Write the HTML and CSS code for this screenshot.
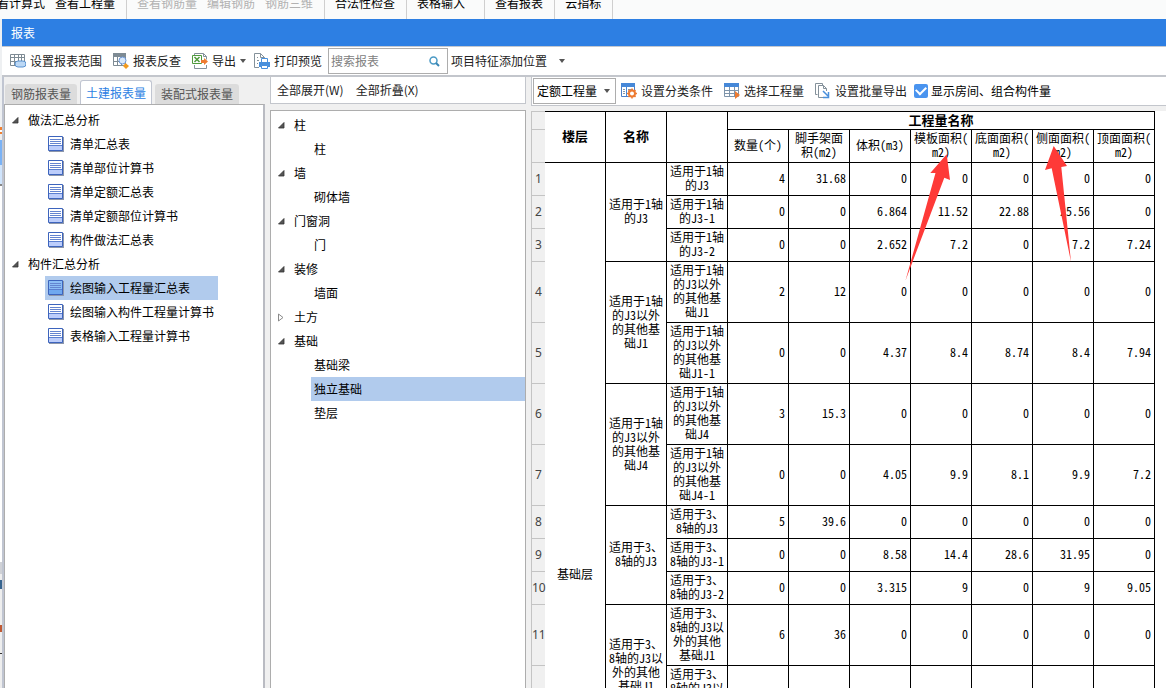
FILE: index.html
```html
<!DOCTYPE html>
<html lang="zh-CN">
<head>
<meta charset="utf-8">
<title>报表</title>
<link rel="stylesheet" href="styles.css">
</head>
<body>
<svg class="defs" width="0" height="0" aria-hidden="true">
  <symbol id="i-caret" viewBox="0 0 6 4"><path d="M0 0h6L3 4z" fill="#555"/></symbol>
  <symbol id="i-open" viewBox="0 0 7 7"><path d="M6 .5V6H.5z" fill="#555" stroke="#333" stroke-width=".8"/></symbol>
  <symbol id="i-closed" viewBox="0 0 6 9"><path d="M.5 1v7L5 4.500z" fill="#fff" stroke="#8a8a8a"/></symbol>
  <symbol id="i-doc" viewBox="0 0 16 16">
    <path d="M1 1h15v15H1z" fill="#8d97ab"/>
    <path d="M.5 .5h14v14H.5z" fill="var(--doc-top,#fff)" stroke="#3d64bd"/>
    <path d="M1 10h13v4H1z" fill="var(--doc-base,#bccdfb)"/>
    <path d="M2 3.500h11M2 5.500h11M2 7.500h11" stroke="#6484d0"/>
    <path d="M1 9.500h13" stroke="#5b7fd0"/>
  </symbol>
</svg>

<nav class="ribbon">
  <div class="ribbon-group"><span>看计算式</span><span>查看工程量</span></div>
  <div class="ribbon-group is-off"><span>查看钢筋量</span><span>编辑钢筋</span><span>钢筋三维</span></div>
  <div class="ribbon-group"><span>合法性检查</span></div>
  <div class="ribbon-group is-wide"><span>表格输入</span></div>
  <div class="ribbon-group"><span>查看报表</span></div>
  <div class="ribbon-group"><span>云指标</span></div>
</nav>

<div class="stage">
  <div class="backdrop"></div>
  <main class="window">
    <h1 class="title">报表</h1>
    <div class="toolbar">
      <button class="tool"><svg width="16" height="16" viewBox="0 0 16 16" fill="none"><path d="M.5 1.500h14v11h-14zM.5 4.500h14M.5 8.500h14M4.500 1v11M8.500 1v8M11.500 1v8" stroke="#7e8b94"/><rect x="5" y="8" width="11" height="6" rx="3" fill="#bcd8f5" stroke="#5b92cf"/></svg>设置报表范围</button>
      <button class="tool"><svg width="16" height="16" viewBox="0 0 16 16" fill="none"><path d="M0 0h13v4H0z" fill="#7e8b94"/><path d="M.5 .5h12v12H.5zM.5 8.500h12M4.500 4v9M8.500 4v9" stroke="#7e8b94"/><circle cx="9.500" cy="7.500" r="3.500" fill="#d9e9fb" stroke="#6b96d6"/><path d="M12.500 10l3.500 3-3 3-3-3z" fill="#f29a1f"/></svg>报表反查</button>
      <button class="tool tool-menu"><svg width="16" height="16" viewBox="0 0 16 16" fill="none"><path d="M2.500 3V.5h9l3 3v3M14.500 12v3.500h-12V12M11.500 .5v3h3" stroke="#84919a"/><path d="M.5 2.500h9v8h-9z" fill="#fff" stroke="#4f9a3d"/><path d="M2.500 4l5 5m0-5l-5 5" stroke="#4f9a3d" stroke-width="1.500"/><path d="M9 7h3V5l4 3.500-4 3.500v-2H9z" fill="#ee7b31"/></svg>导出<svg class="caret" width="6" height="4"><use href="#i-caret"/></svg></button>
      <button class="tool"><svg width="16" height="16" viewBox="0 0 16 16" fill="none"><path d="M5 14.500H.5V.5h6l4 4V6M6.500 .5v4h4M3 4.500h1M3 7.500h2M3 10.500h1" stroke="#84919a"/><path d="M5 9h11v5H5z" fill="#4a90dc"/><path d="M7.500 9V5.500h6V9M7.500 12.500h6v3h-6z" fill="#fff" stroke="#4a90dc"/></svg>打印预览</button>
      <label class="search"><input type="text" placeholder="搜索报表" aria-label="搜索报表"><svg width="11" height="11" viewBox="0 0 11 11" fill="none"><circle cx="4.500" cy="4.500" r="3.500" stroke="#4b9ac5" stroke-width="1.500"/><path d="M7 7l3 3" stroke="#3a86b5" stroke-width="2"/></svg></label>
      <button class="tool tool-feature">项目特征添加位置<svg class="caret" width="6" height="4"><use href="#i-caret"/></svg></button>
    </div>

    <div class="columns">
      <section class="reports">
        <div class="tabs" role="tablist">
          <button class="tab" role="tab">钢筋报表量</button>
          <button class="tab is-active" role="tab" aria-selected="true">土建报表量</button>
          <button class="tab" role="tab">装配式报表量</button>
        </div>
        <ul class="tree report-tree">
          <li class="node"><button class="toggle" aria-label="折叠"><svg width="7" height="7"><use href="#i-open"/></svg></button>做法汇总分析</li>
          <li class="leaf"><svg width="16" height="16"><use href="#i-doc"/></svg>清单汇总表</li>
          <li class="leaf"><svg width="16" height="16"><use href="#i-doc"/></svg>清单部位计算书</li>
          <li class="leaf"><svg width="16" height="16"><use href="#i-doc"/></svg>清单定额汇总表</li>
          <li class="leaf"><svg width="16" height="16"><use href="#i-doc"/></svg>清单定额部位计算书</li>
          <li class="leaf"><svg width="16" height="16"><use href="#i-doc"/></svg>构件做法汇总表</li>
          <li class="node"><button class="toggle" aria-label="折叠"><svg width="7" height="7"><use href="#i-open"/></svg></button>构件汇总分析</li>
          <li class="leaf is-selected"><svg width="16" height="16"><use href="#i-doc"/></svg>绘图输入工程量汇总表</li>
          <li class="leaf"><svg width="16" height="16"><use href="#i-doc"/></svg>绘图输入构件工程量计算书</li>
          <li class="leaf"><svg width="16" height="16"><use href="#i-doc"/></svg>表格输入工程量计算书</li>
        </ul>
      </section>

      <section class="parts">
        <div class="parts-bar"><button class="tool">全部展开(W)</button><button class="tool">全部折叠(X)</button></div>
        <ul class="tree part-tree">
          <li class="node"><button class="toggle" aria-label="折叠"><svg width="7" height="7"><use href="#i-open"/></svg></button>柱</li>
          <li class="leaf">柱</li>
          <li class="node"><button class="toggle" aria-label="折叠"><svg width="7" height="7"><use href="#i-open"/></svg></button>墙</li>
          <li class="leaf">砌体墙</li>
          <li class="node"><button class="toggle" aria-label="折叠"><svg width="7" height="7"><use href="#i-open"/></svg></button>门窗洞</li>
          <li class="leaf">门</li>
          <li class="node"><button class="toggle" aria-label="折叠"><svg width="7" height="7"><use href="#i-open"/></svg></button>装修</li>
          <li class="leaf">墙面</li>
          <li class="node"><button class="toggle" aria-label="展开"><svg width="6" height="9"><use href="#i-closed"/></svg></button>土方</li>
          <li class="node"><button class="toggle" aria-label="折叠"><svg width="7" height="7"><use href="#i-open"/></svg></button>基础</li>
          <li class="leaf">基础梁</li>
          <li class="leaf is-selected">独立基础</li>
          <li class="leaf">垫层</li>
        </ul>
      </section>

      <section class="result">
        <div class="result-bar">
          <div class="picker"><select aria-label="工程量类型"><option>定额工程量</option></select><svg class="caret" width="6" height="4"><use href="#i-caret"/></svg></div>
          <button class="tool"><svg width="16" height="16" viewBox="0 0 16 16" fill="none"><path d="M.5 1.500h13v12H.5z" fill="#fff" stroke="#4a80c8"/><path d="M0 0h14v4H0z" fill="#4688d8"/><path d="M5.500 4v9" stroke="#4688d8"/><path d="M2 6.500h2M2 8.500h2M2 10.500h2M7 6.500h5M7 8.500h3" stroke="#8897a5"/><circle cx="11" cy="10.500" r="3" fill="#fff" stroke="#ee7b31" stroke-width="2"/><path d="M11 5.500v2M11 13.500v2M6 10.500h2M14 10.500h2M7.500 7l1.500 1.500M13 12.500l1.500 1.500M14.500 7L13 8.500M9 12.500L7.500 14" stroke="#ee7b31" stroke-width="1.500"/></svg>设置分类条件</button>
          <button class="tool"><svg width="16" height="16" viewBox="0 0 16 16" fill="none"><path d="M.5 1.500h14v12H.5zM0 7.500h15M0 10.500h15M5.500 4v10M10.500 4v10" stroke="#7e94aa"/><path d="M0 0h15v4H0z" fill="#4688d8"/><path d="M11 8v8l5-4z" fill="#ee7b31"/></svg>选择工程量</button>
          <button class="tool"><svg width="16" height="16" viewBox="0 0 16 16" fill="none"><path d="M2.500 11.500h-2V.5h7v2" stroke="#84919a"/><path d="M8 14.500H3.500v-12h5l3 3V8M8.500 2.500v3h3" stroke="#84919a"/><path d="M8 8l5 5m.5-4v5.500H8" stroke="#4a90dc" stroke-width="1.500"/></svg>设置批量导出</button>
          <label class="check"><input type="checkbox" checked><span>显示房间、组合构件量</span></label>
        </div>

        <div class="sheet">
          <table>
            <colgroup><col class="c-num"><col><col><col><col><col><col><col><col><col><col></colgroup>
            <thead>
              <tr class="r-top"><td class="rn"></td><th rowspan="2">楼层</th><th rowspan="2">名称</th><th rowspan="2"></th><th colspan="7">工程量名称</th></tr>
              <tr class="r-low"><td class="rn"></td><td>数量(个)</td><td>脚手架面<br>积(m2)</td><td>体积(m3)</td><td>模板面积(<br>m2)</td><td>底面面积(<br>m2)</td><td>侧面面积(<br>m2)</td><td>顶面面积(<br>m2)</td></tr>
            </thead>
            <tbody>
              <tr class="r-low"><td class="rn">1</td><td rowspan="13">基础层</td><td rowspan="3">适用于1轴<br>的J3</td><td>适用于1轴<br>的J3</td><td class="n">4</td><td class="n">31.68</td><td class="n">0</td><td class="n">0</td><td class="n">0</td><td class="n">0</td><td class="n">0</td></tr>
              <tr class="r-low"><td class="rn">2</td><td>适用于1轴<br>的J3-1</td><td class="n">0</td><td class="n">0</td><td class="n">6.864</td><td class="n">11.52</td><td class="n">22.88</td><td class="n">25.56</td><td class="n">0</td></tr>
              <tr class="r-low"><td class="rn">3</td><td>适用于1轴<br>的J3-2</td><td class="n">0</td><td class="n">0</td><td class="n">2.652</td><td class="n">7.2</td><td class="n">0</td><td class="n">7.2</td><td class="n">7.24</td></tr>
              <tr class="r-tall"><td class="rn">4</td><td rowspan="2">适用于1轴<br>的J3以外<br>的其他基<br>础J1</td><td>适用于1轴<br>的J3以外<br>的其他基<br>础J1</td><td class="n">2</td><td class="n">12</td><td class="n">0</td><td class="n">0</td><td class="n">0</td><td class="n">0</td><td class="n">0</td></tr>
              <tr class="r-tall"><td class="rn">5</td><td>适用于1轴<br>的J3以外<br>的其他基<br>础J1-1</td><td class="n">0</td><td class="n">0</td><td class="n">4.37</td><td class="n">8.4</td><td class="n">8.74</td><td class="n">8.4</td><td class="n">7.94</td></tr>
              <tr class="r-tall"><td class="rn">6</td><td rowspan="2">适用于1轴<br>的J3以外<br>的其他基<br>础J4</td><td>适用于1轴<br>的J3以外<br>的其他基<br>础J4</td><td class="n">3</td><td class="n">15.3</td><td class="n">0</td><td class="n">0</td><td class="n">0</td><td class="n">0</td><td class="n">0</td></tr>
              <tr class="r-tall"><td class="rn">7</td><td>适用于1轴<br>的J3以外<br>的其他基<br>础J4-1</td><td class="n">0</td><td class="n">0</td><td class="n">4.05</td><td class="n">9.9</td><td class="n">8.1</td><td class="n">9.9</td><td class="n">7.2</td></tr>
              <tr class="r-low"><td class="rn">8</td><td rowspan="3">适用于3、<br>8轴的J3</td><td>适用于3、<br>8轴的J3</td><td class="n">5</td><td class="n">39.6</td><td class="n">0</td><td class="n">0</td><td class="n">0</td><td class="n">0</td><td class="n">0</td></tr>
              <tr class="r-low"><td class="rn">9</td><td>适用于3、<br>8轴的J3-1</td><td class="n">0</td><td class="n">0</td><td class="n">8.58</td><td class="n">14.4</td><td class="n">28.6</td><td class="n">31.95</td><td class="n">0</td></tr>
              <tr class="r-low"><td class="rn">10</td><td>适用于3、<br>8轴的J3-2</td><td class="n">0</td><td class="n">0</td><td class="n">3.315</td><td class="n">9</td><td class="n">0</td><td class="n">9</td><td class="n">9.05</td></tr>
              <tr class="r-tall"><td class="rn">11</td><td rowspan="2">适用于3、<br>8轴的J3以<br>外的其他<br>基础J1</td><td>适用于3、<br>8轴的J3以<br>外的其他<br>基础J1</td><td class="n">6</td><td class="n">36</td><td class="n">0</td><td class="n">0</td><td class="n">0</td><td class="n">0</td><td class="n">0</td></tr>
              <tr class="r-tall"><td class="rn"></td><td>适用于3、<br>8轴的J3以<br>外的其他<br>基础J1-1</td><td></td><td></td><td></td><td></td><td></td><td></td><td></td></tr>
              <tr class="r-rest"><td class="rn"></td><td></td><td></td><td></td><td></td><td></td><td></td><td></td><td></td><td></td></tr>
            </tbody>
          </table>
          <svg class="marks" width="180" height="120" viewBox="0 0 180 120" fill="#fe3a38" aria-hidden="true">
            <path d="M46.700 10.300L30.300 29l5.200 0L5.500 136.500L44.300 33.700l5.700 2.300z"/>
            <path d="M153.700 2L145 26l6.700-1.700L170 113l1 5L161.300 23l5.700-1z"/>
          </svg>
        </div>
      </section>
    </div>
  </main>
</div>
</body>
</html>
```
FILE: styles.css
```css
* { box-sizing: border-box; }

body {
  margin: 0;
  height: 100vh;
  display: flex;
  flex-direction: column;
  overflow: hidden;
  background: #f0f0f0;
  color: #000;
  font: 12px/16px "Noto Sans CJK SC", sans-serif;
  white-space: nowrap;
}

button, input, select { font: inherit; color: inherit; }
button { border: 0; background: none; padding: 0; }
svg { display: block; flex: none; }
.defs { position: absolute; }

.ribbon {
  display: flex;
  flex: none;
  align-items: flex-end;
  height: 19px;
  overflow: hidden;
  background: #fafbfb;
}
.ribbon-group {
  display: flex;
  gap: 10px;
  height: 24px;
  padding: 0 11px 0 10px;
  border-right: 1px solid #cfcfcf;
}
.ribbon-group:first-child { margin-left: -13px; }
.ribbon-group.is-wide { padding-right: 19px; }
.is-off { color: #b2b2b2; }

.stage { display: flex; flex: 1; min-height: 0; }
.backdrop {
  width: 2px;
  background: linear-gradient(#eef0f2 108px, #f08030 108px 111px, #fff 111px 113px, #f08030 113px 115px,
    #eee 115px 121px, #7ab2f5 121px 146px, #cfe4fc 146px 165px, #888 165px 167px, #fff 167px 543px,
    #cfd1d6 543px 555px, #eee 555px 561px, #36648f 561px 570px, #eee 570px 606px, #c05a34 606px 613px,
    #eee 613px 634px, #333 634px 635px, #eee 635px);
}
.window { display: flex; flex: 1; flex-direction: column; min-width: 0; }

.title {
  flex: none;
  margin: 0;
  height: 27px;
  padding: 0 9px;
  background: #2d7fe3;
  color: #fff;
  font-size: 12px;
  font-weight: 400;
  line-height: 27px;
}

.toolbar {
  display: flex;
  flex: none;
  align-items: center;
  gap: 1px;
  height: 31px;
  padding-left: 3px;
  border-top: 1px solid #c3c8d0;
  border-bottom: 2px solid #c3c6cc;
  background: #fff;
}
.tool {
  display: flex;
  align-items: center;
  gap: 4px;
  height: 20px;
  padding: 0 5px;
  color: #222;
}
.tool-menu { padding-right: 2px; }
.tool-feature { padding-left: 2px; gap: 12px; }
.search {
  display: flex;
  align-items: center;
  width: 120px;
  height: 26px;
  padding: 0 7px 0 2px;
  border: 1px solid #adadad;
}
.search input { flex: 1; min-width: 0; padding: 0; border: 0; outline: 0; background: none; }
.search input::placeholder { color: #808080; }

.columns {
  display: flex;
  flex: 1;
  gap: 5px;
  min-height: 0;
  border-left: 2px solid #c0c5d1;
}
.reports, .parts, .result { display: flex; flex-direction: column; min-height: 0; }
.reports { flex: none; width: 261px; }
.parts { flex: none; width: 256px; }
.result { flex: 1; min-width: 0; }

.tabs { display: flex; flex: none; align-items: flex-end; gap: 3px; height: 28px; margin-bottom: -1px; padding-left: 1px; }
.tab {
  height: 20px;
  margin-bottom: 1px;
  padding: 0 6px;
  border-radius: 3px 3px 0 0;
  background: #dcdcdc;
  color: #555;
}
.tab.is-active {
  height: 25px;
  margin-bottom: 0;
  padding: 0 5px;
  border: 1px solid #c0c5d1;
  border-bottom: 0;
  background: #fff;
  color: #2d7fe3;
}

.tree {
  flex: 1;
  min-height: 0;
  margin: 0;
  padding: 3px 0 0;
  border: 1px solid #adadad;
  border-bottom: 0;
  background: #fff;
  list-style: none;
}
.report-tree { border-right: 2px solid #b9bbc2; }
.node, .leaf { display: flex; align-items: center; height: 24px; }
.node { padding-left: 7px; }
.toggle { width: 16px; }
.leaf.is-selected { background: #b1cbed; }
.report-tree .leaf { gap: 6px; width: 173px; margin-left: 40px; padding-left: 3px; }
.report-tree .is-selected { --doc-top: #8bbdf5; --doc-base: #6fa8ef; }
.part-tree { padding-top: 2px; }
.part-tree .leaf { margin-left: 40px; padding-left: 3px; }

.parts-bar {
  display: flex;
  flex: none;
  align-items: center;
  gap: 2px;
  height: 27px;
  margin-bottom: 6px;
  padding-left: 1px;
  border: 1px solid #c3c6cc;
  border-top: 0;
  background: #fff;
}

.result-bar {
  display: flex;
  flex: none;
  align-items: center;
  height: 29px;
  margin-bottom: 5px;
  padding-left: 1px;
  border-left: 1px solid #c3c6cc;
  border-bottom: 1px solid #c3c6cc;
  background: #fff;
}
.result-bar .tool + .tool { margin-left: 1px; }
.picker {
  display: flex;
  align-items: center;
  width: 83px;
  height: 26px;
  padding: 0 5px 0 3px;
  border: 1px solid #adadad;
}
.picker select { flex: 1; min-width: 0; padding: 0; border: 0; background: none; appearance: none; }
.check { display: flex; align-items: center; gap: 3px; padding-left: 2px; }
.check input {
  appearance: none;
  width: 14px;
  height: 14px;
  margin: 0;
  border-radius: 2px;
  background: #4a94ef;
  display: grid;
  place-items: center;
}
.check input:checked::before {
  content: "";
  width: 8px;
  height: 5px;
  margin-bottom: 3px;
  border: solid #fff;
  border-width: 0 0 2px 2px;
  rotate: -45deg;
}

.sheet { position: relative; flex: 1; min-height: 0; overflow: hidden; background: #fff; }
table {
  width: 624px;
  table-layout: fixed;
  border-collapse: separate;
  border-spacing: 0;
  font: 12px/14px "Noto Sans Mono CJK SC", "Noto Sans CJK SC", monospace;
  text-align: center;
}
col { width: 61px; }
.c-num { width: 14px; }
th, td { padding: 0 0 2px; border: solid #000; border-width: 0 1px 1px 0; }
th { font-size: 13px; font-weight: 700; }
.n { padding-right: 3px; text-align: right; }
.rn {
  padding: 0;
  border-color: #c4c4c4;
  border-width: 0 0 1px 1px;
  background: #f0f0f0;
  color: #444;
  font: 12px/14px "Noto Sans", sans-serif;
}
.r-top { height: 19px; }
.r-top > * { border-top-width: 1px; }
.r-low { height: 33px; }
.r-tall { height: 61px; }
.r-rest { height: 261px; }
.marks { position: absolute; left: 369px; top: 33px; overflow: visible; }
```
